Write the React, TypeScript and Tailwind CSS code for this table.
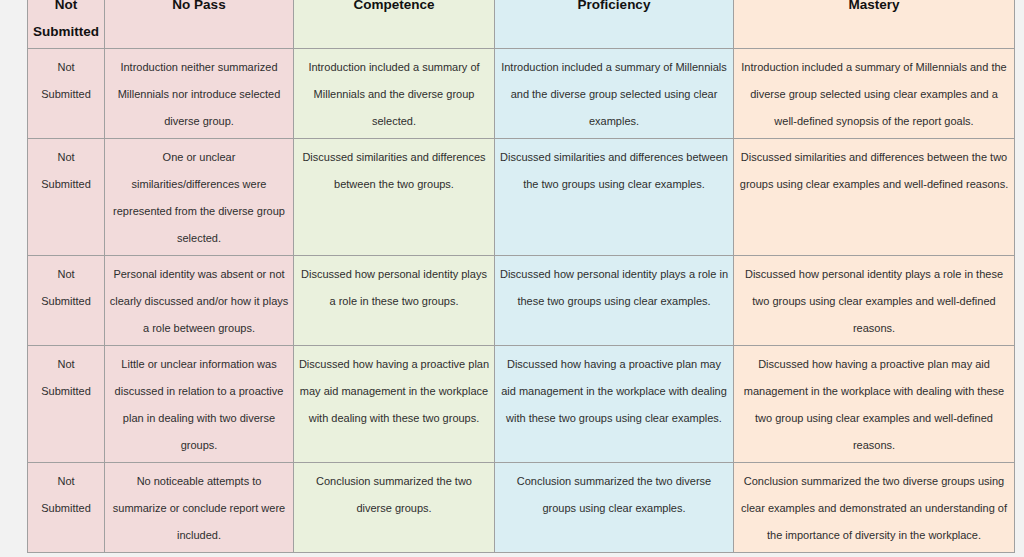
const columns = [
  { title: ["Not", "Submitted"], width: "w-[77px]", bg: "bg-[#f2dbdb]" },
  { title: ["No Pass"], width: "w-[189px]", bg: "bg-[#f2dbdb]" },
  { title: ["Competence"], width: "w-[201px]", bg: "bg-[#eaf1dd]" },
  { title: ["Proficiency"], width: "w-[239px]", bg: "bg-[#daeef3]" },
  { title: ["Mastery"], width: "w-[281px]", bg: "bg-[#fde9d9]" },
];

const notSubmitted = ["Not", "Submitted"];

// each cell is a list of the lines as they wrap in the reference
const rows: string[][][] = [
  [
    notSubmitted,
    ["Introduction neither summarized", "Millennials nor introduce selected", "diverse group."],
    ["Introduction included a summary of", "Millennials and the diverse group", "selected."],
    ["Introduction included a summary of Millennials", "and the diverse group selected using clear", "examples."],
    [
      "Introduction included a summary of Millennials and the",
      "diverse group selected using clear examples and a",
      "well-defined synopsis of the report goals.",
    ],
  ],
  [
    notSubmitted,
    ["One or unclear", "similarities/differences were", "represented from the diverse group", "selected."],
    ["Discussed similarities and differences", "between the two groups."],
    ["Discussed similarities and differences between", "the two groups using clear examples."],
    [
      "Discussed similarities and differences between the two",
      "groups using clear examples and well-defined reasons.",
    ],
  ],
  [
    notSubmitted,
    ["Personal identity was absent or not", "clearly discussed and/or how it plays", "a role between groups."],
    ["Discussed how personal identity plays", "a role in these two groups."],
    ["Discussed how personal identity plays a role in", "these two groups using clear examples."],
    [
      "Discussed how personal identity plays a role in these",
      "two groups using clear examples and well-defined",
      "reasons.",
    ],
  ],
  [
    notSubmitted,
    ["Little or unclear information was", "discussed in relation to a proactive", "plan in dealing with two diverse", "groups."],
    ["Discussed how having a proactive plan", "may aid management in the workplace", "with dealing with these two groups."],
    [
      "Discussed how having a proactive plan may",
      "aid management in the workplace with dealing",
      "with these two groups using clear examples.",
    ],
    [
      "Discussed how having a proactive plan may aid",
      "management in the workplace with dealing with these",
      "two group using clear examples and well-defined",
      "reasons.",
    ],
  ],
  [
    notSubmitted,
    ["No noticeable attempts to", "summarize or conclude report were", "included."],
    ["Conclusion summarized the two", "diverse groups."],
    ["Conclusion summarized the two diverse", "groups using clear examples."],
    [
      "Conclusion summarized the two diverse groups using",
      "clear examples and demonstrated an understanding of",
      "the importance of diversity in the workplace.",
    ],
  ],
];

function Lines({ lines }: { lines: string[] }) {
  return (
    <>
      {lines.map((l, i) => (
        <div key={i} className="whitespace-nowrap">
          {l}
        </div>
      ))}
    </>
  );
}

export default function App() {
  return (
    <div
      className="h-[557px] w-[1024px] overflow-hidden bg-[#f2f2f2] pl-[27px]"
      style={{ fontFamily: '"Liberation Sans", Arial, sans-serif' }}
    >
      <table className="mt-[-15px] w-[987px] table-fixed border-collapse">
        <colgroup>
          {columns.map((c, i) => (
            <col key={i} className={c.width} />
          ))}
        </colgroup>
        <thead>
          <tr>
            {columns.map((c, i) => (
              <th
                key={i}
                className={`${c.bg} border border-[#a0a0a0] px-[4px] pt-[5px] pb-[3px] text-center align-top text-[13.5px] leading-[27px] font-bold text-[#111]`}
              >
                <Lines lines={c.title} />
              </th>
            ))}
          </tr>
        </thead>
        <tbody>
          {rows.map((row, r) => (
            <tr key={r}>
              {row.map((cell, i) => (
                <td
                  key={i}
                  className={`${columns[i].bg} border border-[#a0a0a0] px-[4px] pt-[5px] pb-[3px] text-center align-top text-[11px] leading-[27px] text-[#2e2e2e]`}
                >
                  <Lines lines={cell} />
                </td>
              ))}
            </tr>
          ))}
        </tbody>
      </table>
    </div>
  );
}
